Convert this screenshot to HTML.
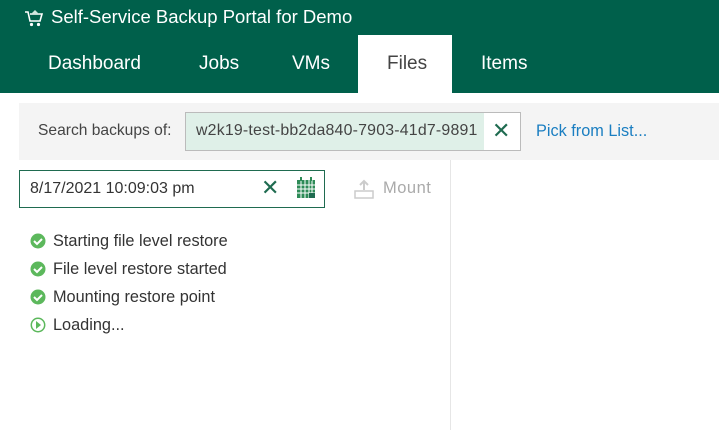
<!DOCTYPE html>
<html><head><style>
*{margin:0;padding:0;box-sizing:border-box}
body{width:719px;height:430px;overflow:hidden;background:#fff;font-family:"Liberation Sans","DejaVu Sans",sans-serif;color:#333;position:relative}
.hdr{position:absolute;left:0;top:0;width:719px;height:93px;background:#00604b}
.t{position:absolute;color:#fff;font-size:18.5px}
.tab{position:absolute;top:53px;color:#fff;font-size:19px}
.ab{position:absolute;font-size:16.3px}
</style></head><body>
<div class="hdr"></div>
<svg style="position:absolute;left:24px;top:8px" width="20" height="20" viewBox="0 0 20 20"><path d="M1 4h3l2 9h10l2-7H6" fill="none" stroke="#fff" stroke-width="1.6"/><path d="M7 6l4-4 4 4z" fill="#cfe8df"/><circle cx="7.5" cy="16.5" r="1.6" fill="#fff"/><circle cx="14.5" cy="16.5" r="1.6" fill="#fff"/></svg>
<div class="t" style="left:51px;top:6px">Self-Service Backup Portal for Demo</div>
<div style="position:absolute;left:358px;top:35px;width:94px;height:58px;background:#fff"></div>
<div class="tab" style="left:48px">Dashboard</div>
<div class="tab" style="left:199px">Jobs</div>
<div class="tab" style="left:292px">VMs</div>
<div class="tab" style="left:387px;color:#444">Files</div>
<div class="tab" style="left:481px">Items</div>
<div style="position:absolute;left:19px;top:103px;width:700px;height:57px;background:#f4f4f4"></div>
<div class="ab" style="left:38px;top:122px;color:#444;font-size:15.6px">Search backups of:</div>
<div style="position:absolute;left:185px;top:112px;width:336px;height:39px;border:1px solid #bbb;background:#fff"></div>
<div style="position:absolute;left:186px;top:113px;width:298px;height:37px;background:#dff0e8"></div>
<div class="ab" style="left:196px;top:122px;color:#444;font-size:15.9px;letter-spacing:0.2px">w2k19-test-bb2da840-7903-41d7-9891</div>
<div class="ab" style="left:492px;top:118px;font-size:22px;color:#1f6b50;font-weight:bold">✕</div>
<div class="ab" style="left:536px;top:122px;color:#1a7ec1">Pick from List...</div>
<div style="position:absolute;left:450px;top:160px;width:1px;height:270px;background:#e6e6e6"></div>
<div style="position:absolute;left:19px;top:170px;width:306px;height:38px;border:1.5px solid #1f6b50"></div>
<div class="ab" style="left:30px;top:180px;color:#333;font-size:16px">8/17/2021 10:09:03 pm</div>
<div class="ab" style="left:261px;top:175px;font-size:22px;color:#1f6b50;font-weight:bold">✕</div>
<svg style="position:absolute;left:296px;top:177px" width="20" height="22" viewBox="0 0 20 22"><rect x="1" y="3" width="18" height="18" fill="#2e8b57"/><path d="M1 8h18M1 12h18M1 16h18M5 3v18M9 3v18M13 3v18M16 3v18" stroke="#fff" stroke-width="1"/><rect x="4" y="0" width="2" height="4" fill="#2e8b57"/><rect x="14" y="0" width="2" height="4" fill="#2e8b57"/><rect x="13" y="16" width="6" height="5" fill="#1f6b50"/></svg>
<svg style="position:absolute;left:354px;top:179px" width="20" height="20" viewBox="0 0 20 20"><path d="M10 2v9M6 6l4-4 4 4" fill="none" stroke="#ccc" stroke-width="2"/><rect x="1" y="12" width="18" height="7" fill="none" stroke="#ccc" stroke-width="1.5"/></svg>
<div class="ab" style="left:383px;top:179px;color:#aaa;font-size:16.5px;letter-spacing:0.5px">Mount</div>
<svg style="position:absolute;left:30px;top:233px" width="16" height="100" viewBox="0 0 16 100"><g fill="#5cb85c"><circle cx="8" cy="8" r="7.5"/><circle cx="8" cy="36" r="7.5"/><circle cx="8" cy="64" r="7.5"/></g><g fill="none" stroke="#fff" stroke-width="2"><path d="M4 8l3 3 5-5"/><path d="M4 36l3 3 5-5"/><path d="M4 64l3 3 5-5"/></g><circle cx="8" cy="92" r="6.7" fill="none" stroke="#5cb85c" stroke-width="1.5"/><path d="M6 88v8l5-4z" fill="#5cb85c"/></svg>
<div class="ab" style="left:53px;top:232px">Starting file level restore</div>
<div class="ab" style="left:53px;top:260px">File level restore started</div>
<div class="ab" style="left:53px;top:288px">Mounting restore point</div>
<div class="ab" style="left:53px;top:316px">Loading...</div>
</body></html>
